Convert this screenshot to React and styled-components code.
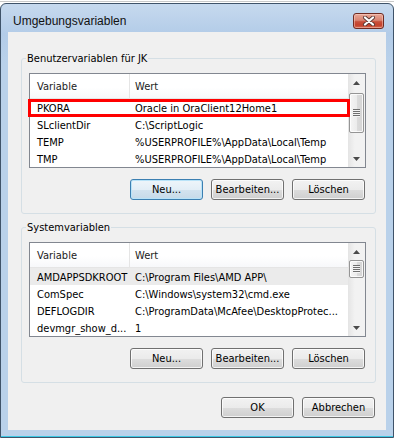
import React from 'react';
import styled, { createGlobalStyle, css } from 'styled-components';

// --- data ---
const userVars = [
  { name: 'PKORA', value: 'Oracle in OraClient12Home1', marked: true },
  { name: 'SLclientDir', value: 'C:\\ScriptLogic' },
  { name: 'TEMP', value: '%USERPROFILE%\\AppData\\Local\\Temp' },
  { name: 'TMP', value: '%USERPROFILE%\\AppData\\Local\\Temp' },
];

const systemVars = [
  { name: 'AMDAPPSDKROOT', value: 'C:\\Program Files\\AMD APP\\', selected: true },
  { name: 'ComSpec', value: 'C:\\Windows\\system32\\cmd.exe' },
  { name: 'DEFLOGDIR', value: 'C:\\ProgramData\\McAfee\\DesktopProtec...' },
  { name: 'devmgr_show_d...', value: '1' },
];

const dialogFont = '"DejaVu Sans Condensed", "DejaVu Sans", sans-serif';

// --- styled components ---
const GlobalStyle = createGlobalStyle`
  html, body {
    margin: 0;
    padding: 0;
    background: #ffffff;
  }

  body {
    font-family: ${dialogFont};
    font-size: 11px;
    color: #000;
  }
`;

const Desktop = styled.div`
  width: 394px;
  height: 438px;
  padding-top: 3px;
  box-sizing: border-box;
  background: linear-gradient(#ffffff 0, #ffffff 1px, #c9c9c9 1px, #c9c9c9 2px, #ffffff 2px);
`;

const Window = styled.div`
  height: 435px;
  box-sizing: border-box;
  display: flex;
  flex-direction: column;
  border: 1px solid #3f5369;
  border-radius: 6px 6px 0 0;
  background: linear-gradient(#c6d9ee 0, #b3cce8 30px, #b9d1ea 60px, #b9d1ea);
  box-shadow: inset 0 -1px 0 #3cc8e4;
`;

const TitleBar = styled.div`
  height: 28px;
  box-sizing: border-box;
  display: flex;
  align-items: center;
  justify-content: space-between;
  padding: 6px 9px 0 12px;
`;

const Title = styled.span`
  font-family: "Liberation Sans", Arial, sans-serif;
  font-size: 12px;
  color: #111;
`;

const CloseButton = styled.button`
  width: 31px;
  height: 16px;
  padding: 0;
  display: flex;
  align-items: center;
  justify-content: center;
  border: 1px solid #6f2b22;
  border-radius: 3px;
  background: linear-gradient(#e9a797 0%, #d98472 45%, #c8503b 55%, #c4412c 80%, #d56b52 100%);
  box-shadow: inset 0 0 0 1px rgba(255, 220, 210, 0.45);
`;

const Client = styled.div`
  flex: 1;
  margin: 0 7px 7px;
  display: flex;
  flex-direction: column;
  padding: 0 10px 0 13px;
  background: #f0f0f0;
`;

const GroupBox = styled.fieldset`
  margin: ${(p) => p.$gap}px 0 0;
  padding: 7px 9px 13px 7px;
  border: 1px solid #d5dfe5;
  border-radius: 3px;
  min-width: 0;
`;

const Caption = styled.legend`
  margin-left: -3px;
  padding: 0 1px;
  line-height: 15px;
`;

const List = styled.div`
  height: 95px;
  box-sizing: border-box;
  display: flex;
  border: 1px solid #828790;
  background: #fff;
`;

const Table = styled.div`
  flex: 1;
  min-width: 0;
  display: flex;
  flex-direction: column;
`;

const Header = styled.div`
  height: 25px;
  box-sizing: border-box;
  display: flex;
  border-bottom: 1px solid #e5e5e5;
  background: linear-gradient(#ffffff 0, #ffffff 55%, #f7f8fa 100%);
`;

const HeadCell = styled.div`
  display: flex;
  align-items: center;
  padding-top: 1px;
  color: #222;
  ${(p) =>
    p.$first
      ? css`
          width: 100px;
          box-sizing: border-box;
          padding-left: 7px;
          border-right: 1px solid #e5e5e5;
        `
      : css`
          flex: 1;
          padding-left: 5px;
        `}
`;

const Row = styled.div`
  position: relative;
  height: 17px;
  display: flex;
  align-items: center;
  padding-top: 1px;
  box-sizing: border-box;
  background: ${(p) => (p.$selected ? '#ebebeb' : 'transparent')};

  ${(p) =>
    p.$marked &&
    css`
      &::after {
        content: '';
        position: absolute;
        left: -2px;
        right: -2px;
        top: 0;
        bottom: -1px;
        border: 3px solid #ff0000;
        z-index: 2;
        pointer-events: none;
      }
    `}
`;

const Cell = styled.div`
  white-space: nowrap;
  overflow: hidden;
  ${(p) =>
    p.$first
      ? css`
          width: 100px;
          flex: none;
          box-sizing: border-box;
          padding: 0 1px 0 7px;
        `
      : css`
          flex: 1;
          padding-left: 5px;
        `}
`;

const ScrollBar = styled.div`
  width: 17px;
  flex: none;
  display: flex;
  flex-direction: column;
  background: linear-gradient(to right, #e4e4e4, #f2f2f2 40%, #f2f2f2);
`;

const ArrowButton = styled.div`
  height: 17px;
  flex: none;
  display: flex;
  align-items: center;
  justify-content: center;
`;

const Track = styled.div`
  flex: 1;
  display: flex;
  flex-direction: column;
  align-items: center;
`;

const Thumb = styled.div`
  width: 15px;
  height: ${(p) => p.$height}px;
  margin-top: ${(p) => p.$top}px;
  box-sizing: border-box;
  display: flex;
  align-items: center;
  justify-content: center;
  border: 1px solid #959595;
  border-radius: 2px;
  background: linear-gradient(to right, #f5f5f5, #ececec 50%, #dcdcdc 51%, #d4d4d4);
  box-shadow: inset 0 0 0 1px rgba(255, 255, 255, 0.8);
`;

const Grip = styled.div`
  width: 7px;
  height: 8px;
  background: repeating-linear-gradient(#6f6f6f 0, #6f6f6f 1px, #f4f4f4 1px, #f4f4f4 2px);
`;

const ButtonRow = styled.div`
  display: flex;
  justify-content: flex-end;
  gap: 8px;
  margin-top: ${(p) => p.$gap}px;
  padding-right: 1px;
`;

const Button = styled.button`
  width: 73px;
  height: 21px;
  padding: 0;
  font-family: ${dialogFont};
  font-size: 11px;
  color: #000;
  border: 1px solid #707070;
  border-radius: 3px;
  background: linear-gradient(#f2f2f2 0%, #ebebeb 50%, #dddddd 51%, #cfcfcf 100%);
  box-shadow: inset 0 0 0 1px rgba(255, 255, 255, 0.75);

  ${(p) =>
    p.$default &&
    css`
      border-color: #3c7fb1;
      background: linear-gradient(#eef5fa 0%, #e3eef6 50%, #d3e3ef 51%, #c6dae9 100%);
      box-shadow: inset 0 0 0 1px #b9e3f8;
    `}
`;

// --- components ---
function ArrowIcon({ down }) {
  return (
    <svg width="7" height="4" viewBox="0 0 7 4">
      <polygon points={down ? '0,0 7,0 3.5,4' : '0,4 7,4 3.5,0'} fill="#4a4a4a" />
    </svg>
  );
}

function VarList({ rows, thumbTop, thumbHeight }) {
  return (
    <List>
      <Table>
        <Header>
          <HeadCell $first>Variable</HeadCell>
          <HeadCell>Wert</HeadCell>
        </Header>
        {rows.map((row) => (
          <Row key={row.name} $selected={row.selected} $marked={row.marked}>
            <Cell $first>{row.name}</Cell>
            <Cell>{row.value}</Cell>
          </Row>
        ))}
      </Table>
      <ScrollBar>
        <ArrowButton>
          <ArrowIcon />
        </ArrowButton>
        <Track>
          <Thumb $top={thumbTop} $height={thumbHeight}>
            <Grip />
          </Thumb>
        </Track>
        <ArrowButton>
          <ArrowIcon down />
        </ArrowButton>
      </ScrollBar>
    </List>
  );
}

function VarGroup({ title, rows, gap, thumbTop, thumbHeight, focused }) {
  return (
    <GroupBox $gap={gap}>
      <Caption>{title}</Caption>
      <VarList rows={rows} thumbTop={thumbTop} thumbHeight={thumbHeight} />
      <ButtonRow $gap={11}>
        <Button $default={focused}>Neu...</Button>
        <Button>Bearbeiten...</Button>
        <Button>Löschen</Button>
      </ButtonRow>
    </GroupBox>
  );
}

function App() {
  return (
    <>
      <GlobalStyle />
      <Desktop>
        <Window>
          <TitleBar>
            <Title>Umgebungsvariablen</Title>
            <CloseButton aria-label="Schließen">
              <svg width="14" height="10" viewBox="0 0 14 10">
                <path d="M3 1.5 L11 8.5 M11 1.5 L3 8.5" stroke="#5a3a36" strokeWidth="4" strokeLinecap="round" />
                <path d="M3 1.5 L11 8.5 M11 1.5 L3 8.5" stroke="#ffffff" strokeWidth="2.2" strokeLinecap="round" />
              </svg>
            </CloseButton>
          </TitleBar>
          <Client>
            <VarGroup
              title="Benutzervariablen für JK"
              rows={userVars}
              gap={19}
              thumbTop={2}
              thumbHeight={40}
              focused
            />
            <VarGroup title="Systemvariablen" rows={systemVars} gap={6} thumbTop={0} thumbHeight={18} />
            <ButtonRow $gap={14}>
              <Button>OK</Button>
              <Button>Abbrechen</Button>
            </ButtonRow>
          </Client>
        </Window>
      </Desktop>
    </>
  );
}

export default App;
